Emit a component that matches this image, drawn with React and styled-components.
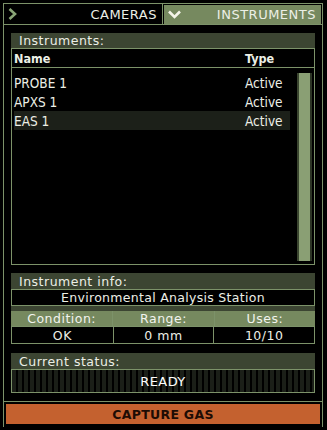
import React from 'react';
import styled, { createGlobalStyle } from 'styled-components';

// Palette //
// ---------------//
const lineGreen = '#7c9269';
const tabGreen = '#76895f';
const olive = '#3c4532';
const scrollGreen = '#8a9f74';
const textLight = '#ecefe6';
const orange = '#c4612f';

const wideFont = `"DejaVu Sans", "Liberation Sans", sans-serif`;
const narrowFont = `"DejaVu Sans Condensed", "Liberation Sans Narrow", "DejaVu Sans", sans-serif`;

const GlobalStyle = createGlobalStyle`
  html, body {
    margin: 0;
    padding: 0;
    background: #000;
  }
  body {
    width: 327px;
    height: 430px;
    overflow: hidden;
  }
`;

// Define Styles //
// ---------------//

const Frame = styled.div`
  margin: 3px 0 0 3px;
  width: 318px;
  height: 423px;
  border: 1px solid ${lineGreen};
  border-bottom: none;
  display: flex;
  flex-direction: column;
`;

const TabRow = styled.div`
  display: flex;
  height: 20px;
  border-bottom: 1px solid ${lineGreen};
`;

const Tab = styled.div`
  display: flex;
  align-items: center;
  justify-content: space-between;
  box-sizing: border-box;
  padding: 0 5px 0 4px;
  font-family: ${wideFont};
  font-size: 13px;
  letter-spacing: 0.5px;
  color: ${textLight};
  background: ${(p) => (p.$active ? tabGreen : '#000')};
  width: ${(p) => (p.$active ? '157px' : '159px')};
  margin: ${(p) => (p.$active ? '1px 0 0 1px' : '0')};
  border-right: ${(p) => (p.$active ? 'none' : `1px solid ${lineGreen}`)};
`;

const Content = styled.div`
  flex: 1;
  display: flex;
  flex-direction: column;
  padding: 8px 7px 0 7px;
`;

const PanelHeader = styled.div`
  height: ${(p) => p.$h || 15}px;
  background: ${olive};
  color: ${textLight};
  font-family: ${wideFont};
  font-size: 12.5px;
  letter-spacing: 0.5px;
  padding-left: 8px;
  display: flex;
  align-items: center;
`;

const ListBox = styled.div`
  height: 215px;
  border: 1px solid ${lineGreen};
  display: flex;
  flex-direction: column;
`;

const ColumnHead = styled.div`
  display: grid;
  grid-template-columns: 231px 1fr;
  height: 18px;
  align-items: center;
  padding-left: 2px;
  border-bottom: 1px solid ${lineGreen};
  font-family: ${narrowFont};
  font-weight: bold;
  font-size: 12.5px;
  color: ${textLight};
`;

const ListBody = styled.div`
  flex: 1;
  display: flex;
  padding: 5px 2px 3px 2px;
  gap: 7px;
`;

const Rows = styled.div`
  flex: 1;
  display: flex;
  flex-direction: column;
`;

const Row = styled.div`
  display: grid;
  grid-template-columns: 231px 1fr;
  align-items: center;
  height: 19px;
  background: ${(p) => (p.$selected ? '#1c2019' : 'transparent')};
  font-family: ${narrowFont};
  font-size: 13.5px;
  color: ${textLight};
`;

const ScrollTrack = styled.div`
  width: 15px;
  box-sizing: border-box;
  background: ${scrollGreen};
  border-left: 2px solid #3b4630;
  border-right: 2px solid #2c3524;
`;

const Gap = styled.div`
  height: ${(p) => p.$h}px;
  flex: none;
`;

const InfoPanel = styled.div`
  background: ${olive};
  display: flex;
  flex-direction: column;
`;

const ValueBox = styled.div`
  height: 15px;
  border: 1px solid ${lineGreen};
  background: #000;
  color: ${textLight};
  font-family: ${wideFont};
  font-size: 12.5px;
  letter-spacing: 0.3px;
  display: flex;
  align-items: center;
  justify-content: center;
`;

const StatGrid = styled.div`
  display: grid;
  grid-template-columns: repeat(3, 1fr);
  background: ${(p) => (p.$labels ? tabGreen : '#000')};
  height: ${(p) => (p.$labels ? 15 : 16)}px;
  border: ${(p) => (p.$labels ? 'none' : `1px solid ${lineGreen}`)};
`;

const StatCell = styled.div`
  display: flex;
  align-items: center;
  justify-content: center;
  font-family: ${wideFont};
  font-size: 12.5px;
  letter-spacing: 0.5px;
  color: ${(p) => (p.$label ? '#f2f4ee' : textLight)};
  & + & {
    border-left: ${(p) => (p.$label ? 'none' : `1px solid ${lineGreen}`)};
  }
`;

const StatusBox = styled.div`
  height: 22px;
  border: 1px solid ${lineGreen};
  background: repeating-linear-gradient(
    to right,
    #1b1f18 0px,
    #1b1f18 4px,
    #000 4px,
    #000 6px
  );
  color: #fff;
  font-family: ${wideFont};
  font-size: 13px;
  letter-spacing: 0.4px;
  display: flex;
  align-items: center;
  justify-content: center;
`;

const Footer = styled.div`
  border-top: 1px solid ${lineGreen};
  margin-top: 7px;
  padding: 2px 2px 3px 2px;
`;

const ActionButton = styled.button`
  display: block;
  width: 314px;
  height: 20px;
  border: none;
  padding: 0;
  background: ${orange};
  color: #1d0c04;
  font-family: ${wideFont};
  font-weight: bold;
  font-size: 12.5px;
  letter-spacing: 0.3px;
`;

// Icons //
// ---------------//
const ChevronRight = () => (
  <svg width="9" height="12" viewBox="0 0 9 12">
    <path d="M1.5 1 L7 6 L1.5 11" fill="none" stroke="#8aa677" strokeWidth="2.6" />
  </svg>
);

const ChevronDown = () => (
  <svg width="13" height="9" viewBox="0 0 13 9">
    <path d="M1 1.5 L6.5 7 L12 1.5" fill="none" stroke="#f4f4e8" strokeWidth="2.6" />
  </svg>
);

// Define Component //
// -----------------//
const instruments = [
  { name: 'PROBE 1', type: 'Active' },
  { name: 'APXS 1', type: 'Active' },
  { name: 'EAS 1', type: 'Active', selected: true },
];

function App() {
  return (
    <>
      <GlobalStyle />
      <Frame>
        <TabRow>
          <Tab>
            <ChevronRight />
            <span>CAMERAS</span>
          </Tab>
          <Tab $active>
            <ChevronDown />
            <span>INSTRUMENTS</span>
          </Tab>
        </TabRow>

        <Content>
          <PanelHeader>Instruments:</PanelHeader>
          <ListBox>
            <ColumnHead>
              <span>Name</span>
              <span>Type</span>
            </ColumnHead>
            <ListBody>
              <Rows>
                {instruments.map((it) => (
                  <Row key={it.name} $selected={it.selected}>
                    <span>{it.name}</span>
                    <span>{it.type}</span>
                  </Row>
                ))}
              </Rows>
              <ScrollTrack />
            </ListBody>
          </ListBox>

          <Gap $h={8} />
          <InfoPanel>
            <PanelHeader $h={16}>Instrument info:</PanelHeader>
            <ValueBox>Environmental Analysis Station</ValueBox>
            <Gap $h={5} />
            <StatGrid $labels>
              <StatCell $label>Condition:</StatCell>
              <StatCell $label>Range:</StatCell>
              <StatCell $label>Uses:</StatCell>
            </StatGrid>
            <StatGrid>
              <StatCell>OK</StatCell>
              <StatCell>0 mm</StatCell>
              <StatCell>10/10</StatCell>
            </StatGrid>
          </InfoPanel>

          <Gap $h={9} />
          <PanelHeader $h={16}>Current status:</PanelHeader>
          <StatusBox>READY</StatusBox>
        </Content>

        <Footer>
          <ActionButton>CAPTURE GAS</ActionButton>
        </Footer>
      </Frame>
    </>
  );
}

export default App;
